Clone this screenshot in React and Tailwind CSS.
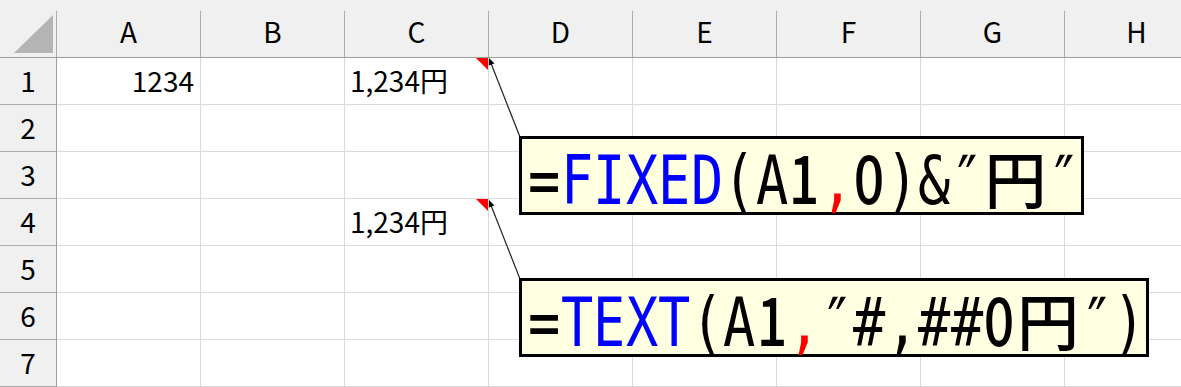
import React from "react";

const COLS = ["A", "B", "C", "D", "E", "F", "G", "H"];
const ROWS = [1, 2, 3, 4, 5, 6, 7];

const colorCls = { k: "text-black", b: "text-[#0000ff]", r: "text-[#ff0000]" };
const alignCls = { c: "justify-center", l: "justify-start", r: "justify-end" };
const originCls = { c: "origin-center", l: "origin-left", r: "origin-right" };
const fontCls = {
  m: "font-['DejaVu_Sans_Mono','Noto_Sans_CJK_JP',monospace] text-[67px] font-normal",
  n: "font-['Noto_Sans_CJK_JP',sans-serif] text-[67px] font-medium",
  j: "font-['Noto_Sans_CJK_JP',sans-serif] text-[62px] font-medium",
};

// [char, color, align, font]
const FORMULA1 = [
  ["=", "k", "c", "m"],
  ["F", "b", "c", "m"],
  ["I", "b", "c", "m"],
  ["X", "b", "c", "m"],
  ["E", "b", "c", "m"],
  ["D", "b", "c", "m"],
  ["(", "k", "r", "m"],
  ["A", "k", "c", "m"],
  ["1", "k", "c", "n"],
  [",", "r", "l", "m"],
  ["0", "k", "c", "n"],
  [")", "k", "l", "m"],
  ["&", "k", "c", "m"],
  ["″", "k", "l", "m"],
  ["円", "k", "c", "j"],
  ["″", "k", "l", "m"],
];

const FORMULA2 = [
  ["=", "k", "c", "m"],
  ["T", "b", "c", "m"],
  ["E", "b", "c", "m"],
  ["X", "b", "c", "m"],
  ["T", "b", "c", "m"],
  ["(", "k", "r", "m"],
  ["A", "k", "c", "m"],
  ["1", "k", "c", "n"],
  [",", "r", "l", "m"],
  ["″", "k", "l", "m"],
  ["#", "k", "c", "m"],
  [",", "k", "l", "m"],
  ["#", "k", "c", "m"],
  ["#", "k", "c", "m"],
  ["0", "k", "c", "n"],
  ["円", "k", "c", "j"],
  ["″", "k", "l", "m"],
  [")", "k", "l", "m"],
];

function Formula({ chars }) {
  return (
    <div className="flex items-baseline leading-none">
      {chars.map(([c, col, al, f], i) => (
        <span
          key={i}
          className={`flex ${c === "円" ? "w-[65px]" : "w-[32.5px]"} ${alignCls[al]} ${colorCls[col]} ${fontCls[f]}`}
        >
          <span className={`inline-block ${c === "円" ? "" : "scale-x-[0.8]"} ${originCls[al]}`}>{c}</span>
        </span>
      ))}
    </div>
  );
}

function RedMark() {
  return (
    <svg className="absolute top-0 right-0" width="12" height="12" viewBox="0 0 12 12">
      <polygon points="0,0 12,0 12,12" fill="#ff0000" />
    </svg>
  );
}

const cellFont = "font-['Noto_Sans_CJK_JP',sans-serif] text-[28px] leading-none text-black";

export default function App() {
  return (
    <div className="relative w-[1181px] h-[387px] overflow-hidden bg-white">
      {/* Header row */}
      <div className="flex h-[58px] bg-[#f0f0f0] border-b border-[#9e9e9e]">
        <div className="flex w-[57px] shrink-0">
          <div className="flex-1 relative">
            <svg className="absolute left-0 top-0" width="56" height="57" viewBox="0 0 56 57">
              <polygon points="53,15 53,53 14,53" fill="#b4b4b4" />
            </svg>
          </div>
          <div className="w-px h-[46px] self-end bg-[#ababab]" />
        </div>
        {COLS.map((c) => (
          <div key={c} className="flex w-[144px] shrink-0">
            <div className={`flex-1 flex items-center justify-center pt-[4px] ${cellFont}`}>{c}</div>
            <div className="w-px h-[46px] self-end bg-[#ababab]" />
          </div>
        ))}
      </div>

      {/* Body rows */}
      {ROWS.map((r) => (
        <div key={r} className="flex h-[47px]">
          <div
            className={`w-[57px] shrink-0 bg-[#f0f0f0] border-r border-b border-r-[#9e9e9e] border-b-[#ababab] flex items-center justify-center pb-[2px] ${cellFont}`}
          >
            {r}
          </div>
          {COLS.map((c) => (
            <div
              key={c}
              className={`relative w-[144px] shrink-0 border-r border-b border-[#dadada] flex items-center pb-[2px] ${cellFont} ${
                c === "A" ? "justify-end pr-[6px]" : "justify-start pl-[5px]"
              }`}
            >
              {r === 1 && c === "A" ? "1234" : null}
              {(r === 1 || r === 4) && c === "C" ? (
                <>
                  <span>1,234円</span>
                  <RedMark />
                </>
              ) : null}
            </div>
          ))}
        </div>
      ))}

      {/* Comment arrows */}
      <svg className="absolute left-0 top-0 pointer-events-none" width="1181" height="387" viewBox="0 0 1181 387">
        <line x1="520" y1="137" x2="490.5" y2="62" stroke="#222" strokeWidth="1.2" />
        <polygon points="489,58 494.4,63.4 488.8,65.6" fill="#000" />
        <line x1="520" y1="279" x2="490.5" y2="204" stroke="#222" strokeWidth="1.2" />
        <polygon points="489,200 494.4,205.4 488.8,207.6" fill="#000" />
      </svg>

      {/* Comment boxes */}
      <div className="absolute left-[519px] top-[136px] w-[565px] h-[79px] bg-[#ffffe1] border-[3px] border-black flex items-center pl-[6px] pt-[5px]">
        <Formula chars={FORMULA1} />
      </div>
      <div className="absolute left-[519px] top-[278px] w-[630px] h-[79px] bg-[#ffffe1] border-[3px] border-black flex items-center pl-[6px] pt-[5px]">
        <Formula chars={FORMULA2} />
      </div>
    </div>
  );
}
